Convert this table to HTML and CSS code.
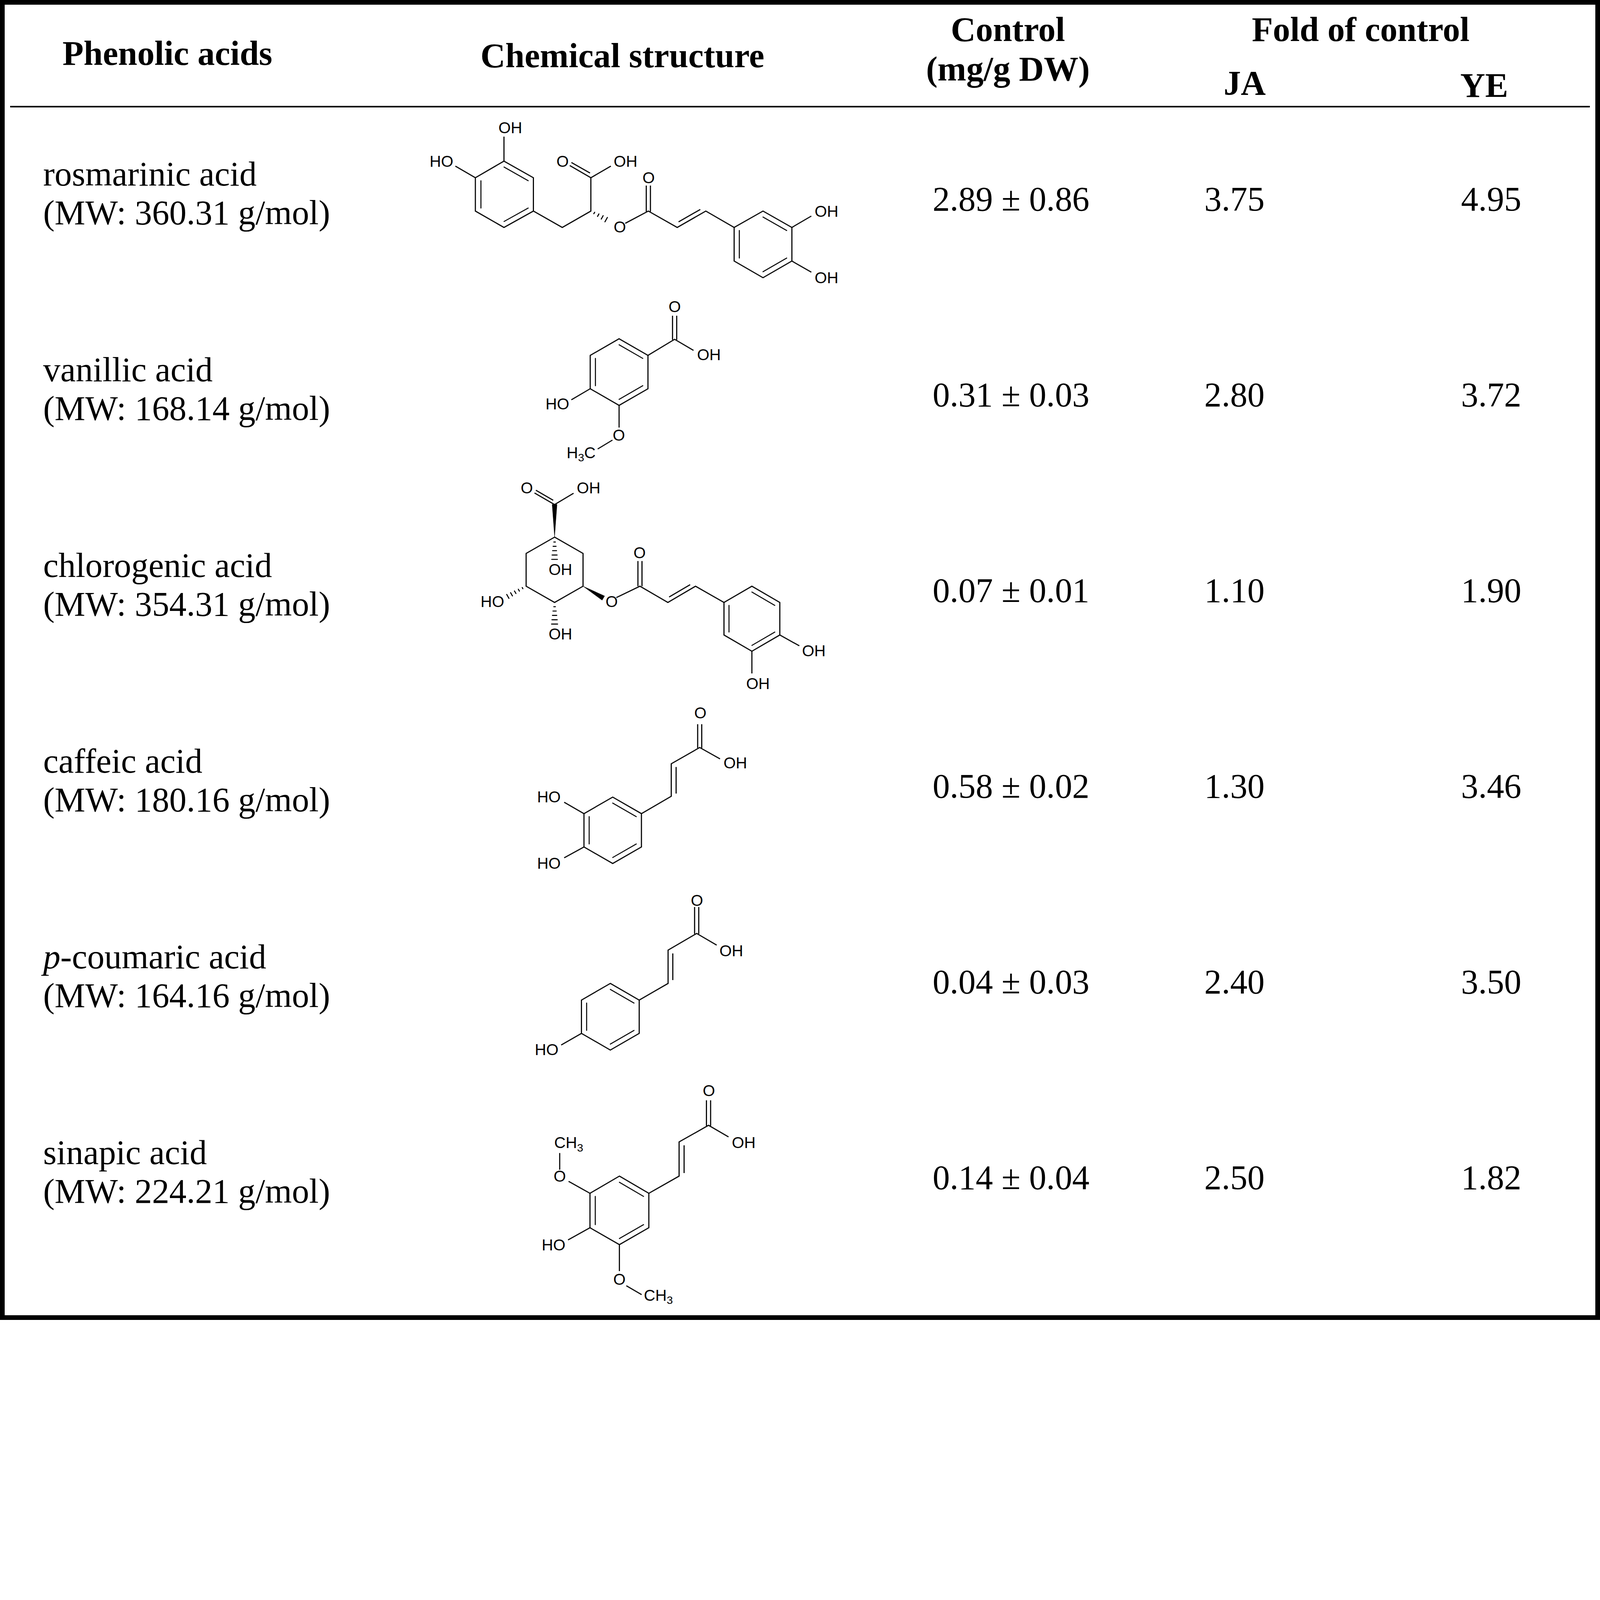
FILE: index.html
```html
<!DOCTYPE html>
<html lang="en">
<head>
<meta charset="utf-8">
<title>Phenolic acids</title>
<link rel="stylesheet" href="styles.css">
</head>
<body>
<div class="page">
  <div class="cols head">
    <div class="h-name">Phenolic acids</div>
    <div class="h-struct">Chemical structure</div>
    <div class="h-control">Control<br>(mg/g DW)</div>
    <div class="h-fold">Fold of control</div>
    <div class="h-ja">JA</div>
    <div class="h-ye">YE</div>
  </div>
  <div class="rule"></div>

  <div class="cols row">
    <div class="name">rosmarinic acid<br>(MW: 360.31 g/mol)</div>
    <div class="struct">
      <svg class="mol s-ros" viewBox="40 40 1500 630">
        <path class="bond" d="M323 208 L429 268 L429 388 L323 447 L220 388 L220 268 Z"/>
        <path class="inner" d="M323.3 229.5 L410.2 278.7 M240 278.7 L240 377.1 M323.3 425.5 L410.2 377.1"/>
        <path class="bond" d="M323 208 V120 M220 268 L148 226 M429 388 L533 447 L636 388 V268 L708 226 M636 268 L560 224 M633 251 L566 213 M760 432 L843 388 L947 447 L1050 388 L1152 447 M835.5 296 V390 M850.5 296 V390 M951.9 426.9 L1030.1 382.1 M1360 447 L1430 406 M1360 568 L1430 608"/>
        <path class="bond" d="M1152 447 L1256 388 L1360 447 L1360 568 L1256 628 L1152 568 Z"/>
        <path class="inner" d="M1256 409.6 L1341.3 458 M1170.7 458 L1170.7 557.2 M1256 606.4 L1341.3 557.2"/>
        <path class="hash" d="M646.7 397.4 L649.7 392.2 M660.1 407.2 L664.9 398.4 M673.4 416.9 L680.2 404.7 M686.7 426.7 L695.5 410.9"/>
        <text class="lbl" x="303" y="108">OH</text>
        <text class="lbl" x="55" y="228">HO</text>
        <text class="lbl" x="512" y="228">O</text>
        <text class="lbl" x="718" y="228">OH</text>
        <text class="lbl" x="822" y="288">O</text>
        <text class="lbl" x="718" y="465">O</text>
        <text class="lbl" x="1442" y="408">OH</text>
        <text class="lbl" x="1442" y="648">OH</text>
      </svg>
    </div>
    <div class="num">2.89 ± 0.86</div>
    <div class="num">3.75</div>
    <div class="num ye">4.95</div>
  </div>

  <div class="cols row">
    <div class="name">vanillic acid<br>(MW: 168.14 g/mol)</div>
    <div class="struct">
      <svg class="mol s-van" viewBox="460 700 660 590">
        <path class="bond" d="M737 848 L841 908 L841 1028 L737 1088 L633 1028 L633 908 Z"/>
        <path class="inner" d="M737 869.6 L822.3 918.8 M651.7 918.8 L651.7 1017.2 M737 1066.4 L822.3 1017.2"/>
        <path class="bond" d="M841 908 L937 850 L1005 890 M929.5 765 V852 M944.5 765 V852 M633 1028 L565 1068 M737 1088 V1168 M713 1213 L660 1245"/>
        <text class="lbl" x="915" y="752">O</text>
        <text class="lbl" x="1018" y="925">OH</text>
        <text class="lbl" x="472" y="1102">HO</text>
        <text class="lbl" x="714" y="1215">O</text>
        <text class="lbl" x="548" y="1278">H<tspan class="sub" dy="12">3</tspan><tspan dy="-12">C</tspan></text>
      </svg>
    </div>
    <div class="num">0.31 ± 0.03</div>
    <div class="num">2.80</div>
    <div class="num ye">3.72</div>
  </div>

  <div class="cols row">
    <div class="name">chlorogenic acid<br>(MW: 354.31 g/mol)</div>
    <div class="struct">
      <svg class="mol s-chl" viewBox="80 50 1300 790">
        <path class="bond" d="M365 262 L470 322 L470 443 L365 503 L260 443 L260 322 Z"/>
        <path class="wedge" d="M365 262 L356 141 L374 141 Z M470 443 L549.6 479.2 L540.4 494.8 Z"/>
        <path class="bond" d="M365 142 L291 99 M360 126 L296 89 M365 142 L435 100 M593 485 L680 443 L783 503 L885 443 L990 503 M672.5 350 V443 M687.5 350 V443 M787.6 482.9 L865.2 437.3 M1196 623 L1268 663 M1093 683 V765"/>
        <path class="bond" d="M990 503 L1093 443 L1196 503 L1196 623 L1093 683 L990 623 Z"/>
        <path class="inner" d="M1093 464.6 L1177.5 513.8 M1008.5 513.8 L1008.5 612.2 M1093 661.4 L1177.5 612.2"/>
        <path class="hash" d="M362.2 280 H367.8 M359.6 296 H370.4 M357.7 312 H372.3 M355.8 328 H374.2 M354.5 344 H375.5"/>
        <path class="hash" d="M245.6 447.8 L248 452.2 M231.2 454.2 L235.2 461.2 M217 460.5 L222.4 470.1 M202.7 466.9 L209.5 479.1 M188.4 473.4 L196.6 487.8"/>
        <path class="hash" d="M362.2 518.6 H367.8 M359 534.7 H371 M357.1 550.7 H372.9 M355.2 566.8 H374.8 M353.9 582.8 H376.1"/>
        <text class="lbl" x="240" y="100">O</text>
        <text class="lbl" x="447" y="100">OH</text>
        <text class="lbl" x="343" y="402">OH</text>
        <text class="lbl" x="92" y="520">HO</text>
        <text class="lbl" x="343" y="640">OH</text>
        <text class="lbl" x="553" y="520">O</text>
        <text class="lbl" x="656" y="340">O</text>
        <text class="lbl" x="1278" y="702">OH</text>
        <text class="lbl" x="1072" y="822">OH</text>
      </svg>
    </div>
    <div class="num">0.07 ± 0.01</div>
    <div class="num">1.10</div>
    <div class="num ye">1.90</div>
  </div>

  <div class="cols row">
    <div class="name">caffeic acid<br>(MW: 180.16 g/mol)</div>
    <div class="struct">
      <svg class="mol s-caf" viewBox="290 880 800 620">
        <path class="bond" d="M473 1282 L579 1221 L685 1282 L685 1405 L579 1466 L473 1405 Z"/>
        <path class="inner" d="M579 1243.1 L665.9 1293.1 M492.1 1293.1 L492.1 1393.9 M579 1443.9 L665.9 1393.9"/>
        <path class="bond" d="M473 1282 L400 1240 M473 1405 L400 1445 M685 1282 L795 1218 V1098 L900 1038 L975 1080 M813 1110 V1208 M892.5 952 V1040 M907.5 952 V1040"/>
        <text class="lbl" x="300" y="1240">HO</text>
        <text class="lbl" x="300" y="1485">HO</text>
        <text class="lbl" x="880" y="930">O</text>
        <text class="lbl" x="988" y="1115">OH</text>
      </svg>
    </div>
    <div class="num">0.58 ± 0.02</div>
    <div class="num">1.30</div>
    <div class="num ye">3.46</div>
  </div>

  <div class="cols row">
    <div class="name"><i>p</i>-coumaric acid<br>(MW: 164.16 g/mol)</div>
    <div class="struct">
      <svg class="mol s-cou" viewBox="200 40 780 600">
        <path class="bond" d="M482 370 L586 430 L586 550 L482 610 L378 550 L378 430 Z"/>
        <path class="inner" d="M482 391.6 L567.3 440.8 M396.7 440.8 L396.7 539.2 M482 588.4 L567.3 539.2"/>
        <path class="bond" d="M378 550 L305 592 M586 430 L690 370 V250 L793 190 L865 232 M707 262 V358 M785.5 95 V192 M800.5 95 V192"/>
        <text class="lbl" x="210" y="628">HO</text>
        <text class="lbl" x="772" y="90">O</text>
        <text class="lbl" x="875" y="272">OH</text>
      </svg>
    </div>
    <div class="num">0.04 ± 0.03</div>
    <div class="num">2.40</div>
    <div class="num ye">3.50</div>
  </div>

  <div class="cols row">
    <div class="name">sinapic acid<br>(MW: 224.21 g/mol)</div>
    <div class="struct">
      <svg class="mol s-sin" viewBox="220 720 810 820">
        <path class="bond" d="M515 1063 L621 1125 L621 1249 L515 1310 L409 1249 L409 1125 Z"/>
        <path class="inner" d="M515 1085.2 L601.9 1136.1 M428.1 1136.1 L428.1 1237.9 M515 1287.8 L601.9 1237.9"/>
        <path class="bond" d="M409 1125 L332 1082 M300 1040 V980 M409 1249 L330 1293 M515 1310 V1405 M540 1458 L595 1490 M621 1125 L730 1063 V940 L836 880 L908 922 M748 952 V1052 M828.5 790 V882 M843.5 790 V882"/>
        <text class="lbl" x="278" y="1083">O</text>
        <text class="lbl" x="280" y="962">CH<tspan class="sub" dy="12">3</tspan></text>
        <text class="lbl" x="235" y="1330">HO</text>
        <text class="lbl" x="493" y="1455">O</text>
        <text class="lbl" x="603" y="1512">CH<tspan class="sub" dy="12">3</tspan></text>
        <text class="lbl" x="815" y="775">O</text>
        <text class="lbl" x="920" y="962">OH</text>
      </svg>
    </div>
    <div class="num">0.14 ± 0.04</div>
    <div class="num">2.50</div>
    <div class="num ye">1.82</div>
  </div>
</div>
</body>
</html>
```
FILE: styles.css
```css
html, body {
  margin: 0;
  padding: 0;
  background: #fff;
}

.page {
  zoom: 2.612245;
  width: 1568px;
  height: 1293.5px;
  box-sizing: border-box;
  border: 4.8px solid #000;
  display: flex;
  flex-direction: column;
  font-family: "Liberation Serif", "Times New Roman", serif;
  color: #000;
  background: #fff;
  overflow: hidden;
}

.cols {
  display: grid;
  grid-template-columns: 395.2px 480px 222px 216px 1fr;
  flex-shrink: 0;
}

/* header */
.head {
  height: 99.2px;
  grid-template-rows: 43.34px 1fr;
  font-weight: bold;
  font-size: 33.8px;
  line-height: 38.1px;
}
.h-name {
  grid-row: 1 / 3;
  grid-column: 1;
  padding: 28.84px 0 0 56.7px;
}
.h-struct {
  grid-row: 1 / 3;
  grid-column: 2;
  padding: 31.04px 0 0 71.1px;
}
.h-control {
  grid-row: 1 / 3;
  grid-column: 3;
  text-align: center;
  line-height: 38.4px;
  padding: 5.09px 6px 0 0;
}
.h-fold {
  grid-row: 1;
  grid-column: 4 / 6;
  text-align: center;
  padding: 5.24px 0 0 1.8px;
}
.h-ja {
  grid-row: 2;
  grid-column: 4;
  text-align: center;
  padding: 14.4px 0 0 20px;
}
.h-ye {
  grid-row: 2;
  grid-column: 5;
  text-align: center;
  padding: 16.9px 0 0 27.8px;
}

.rule {
  height: 1.6px;
  background: #000;
  margin: 0 5.2px;
  flex-shrink: 0;
}

/* body rows */
.row {
  height: 191.8px;
  grid-template-rows: 191.8px;
  font-size: 33.8px;
  line-height: 38.1px;
}
.name {
  padding: 46.14px 0 0 37.7px;
  white-space: nowrap;
}
.num {
  text-align: center;
  padding-top: 70.74px;
  white-space: nowrap;
}
.num.ye {
  padding-left: 41.6px;
}
.struct {
  min-height: 0;
  overflow: visible;
}

/* structures */
.mol {
  display: block;
  overflow: visible;
}
.s-ros { width: 408.14px; height: 171.42px; margin: 6.86px 0 0 17.2px; }
.s-van { width: 179.58px; height: 160.53px; margin: -5.36px 0 0 131.48px; }
.s-chl { width: 345.29px; height: 209.83px; margin: -18.81px 0 0 68.2px; }
.s-caf { width: 212.49px; height: 164.68px; margin: 9.85px 0 0 123.98px; }
.s-cou { width: 212.23px; height: 163.26px; margin: 1.51px 0 0 121.69px; }
.s-sin { width: 220.39px; height: 223.12px; margin: -5.26px 0 0 127.13px; }

.bond {
  fill: none;
  stroke: #000;
  stroke-width: 4;
}
.inner {
  fill: none;
  stroke: #000;
  stroke-width: 3.6;
  stroke-linecap: round;
}
.hash {
  fill: none;
  stroke: #000;
  stroke-width: 3.8;
  stroke-linecap: round;
}
.wedge {
  fill: #000;
  stroke: #000;
  stroke-width: 1;
}
.lbl {
  font-family: "Liberation Sans", Arial, sans-serif;
  font-size: 57px;
  fill: #000;
}
.sub {
  font-size: 40px;
}
.s-chl .lbl,
.s-caf .lbl {
  font-size: 58px;
}
.s-chl .bond,
.s-caf .bond {
  stroke-width: 4.1;
}
```
